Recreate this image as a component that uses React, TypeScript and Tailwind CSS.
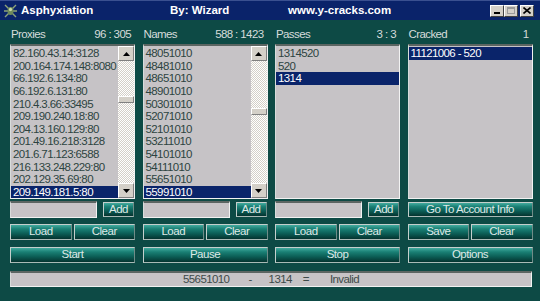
import React from 'react';

const proxies = [
  '82.160.43.14:3128',
  '200.164.174.148:8080',
  '66.192.6.134:80',
  '66.192.6.131:80',
  '210.4.3.66:33495',
  '209.190.240.18:80',
  '204.13.160.129:80',
  '201.49.16.218:3128',
  '201.6.71.123:6588',
  '216.133.248.229:80',
  '202.129.35.69:80',
  '209.149.181.5:80',
];

const names = [
  '48051010',
  '48481010',
  '48651010',
  '48901010',
  '50301010',
  '52071010',
  '52101010',
  '53211010',
  '54101010',
  '54111010',
  '55651010',
  '55991010',
];

const passes = ['1314520', '520', '1314'];
const cracked = ['11121006 - 520'];

function Btn({ label, className }: { label: string; className?: string }) {
  return (
    <div
      className={`flex items-center justify-center border border-[#c4cfcc] border-r-[#6f8c88] border-b-[#a9bab6] bg-[linear-gradient(to_bottom,#43ab9f_0%,#1a8075_28%,#0c5f57_60%,#04332f_100%)] text-[#dfe9e7] text-[11.5px] tracking-[-0.5px] leading-none ${className ?? ''}`}
    >
      {label}
    </div>
  );
}

function ArrowBtn({ up }: { up?: boolean }) {
  return (
    <div className="h-[15px] flex items-center justify-center bg-[#d4d0c8] border border-t-white border-l-white border-r-[#808080] border-b-[#808080]">
      <svg width="7" height="4" viewBox="0 0 7 4">
        {up ? <path d="M3.5 0 L7 4 L0 4 Z" fill="#000" /> : <path d="M0 0 L7 0 L3.5 4 Z" fill="#000" />}
      </svg>
    </div>
  );
}

function ScrollBar({ thumbTop }: { thumbTop: number }) {
  return (
    <div className="w-[16px] flex flex-col">
      <ArrowBtn up />
      <div className="flex-1 bg-[repeating-conic-gradient(#ffffff_0%_25%,#d4d0c8_0%_50%)] bg-[length:2px_2px]">
        <div style={{ height: thumbTop }} />
        <div className="h-[7px] bg-[#d4d0c8] border border-t-white border-l-white border-r-[#808080] border-b-[#808080]" />
      </div>
      <ArrowBtn />
    </div>
  );
}

function ListBox({ items, selected, thumbTop }: { items: string[]; selected: number; thumbTop?: number }) {
  return (
    <div className="h-[155px] flex bg-[#c6c3c6] border-t-2 border-t-[#5b6562] border-l border-l-[#d8dcdb] border-r border-r-[#f2f2f2] border-b border-b-[#f2f2f2]">
      <div className="flex-1 min-w-0 overflow-hidden pt-[1px]">
        {items.map((it, i) => (
          <div
            key={i}
            className={`h-[12.65px] leading-[12.65px] pl-[2px] whitespace-nowrap text-[11.5px] tracking-[-0.6px] ${i === selected ? 'bg-[#0a246a] text-white' : 'text-[#2d4341]'}`}
          >
            {it}
          </div>
        ))}
      </div>
      {thumbTop !== undefined && <ScrollBar thumbTop={thumbTop} />}
    </div>
  );
}

function Column({
  title,
  count,
  items,
  selected,
  thumbTop,
  inputRow,
  mid,
  bottom,
}: {
  title: string;
  count: string;
  items: string[];
  selected: number;
  thumbTop?: number;
  inputRow: React.ReactNode;
  mid: [string, string];
  bottom: string;
}) {
  return (
    <div className="w-[125px] flex flex-col">
      <div className="h-[24px] flex items-end justify-between pb-[4px] pl-[1px] pr-[4px] text-[11.5px] tracking-[-0.6px] text-[#d6dcdb] leading-none">
        <span>{title}</span>
        <span>{count}</span>
      </div>
      <ListBox items={items} selected={selected} thumbTop={thumbTop} />
      <div className="mt-[2px] h-[17px] flex">{inputRow}</div>
      <div className="mt-[6px] h-[16px] flex gap-[2px]">
        <Btn label={mid[0]} className="flex-1" />
        <Btn label={mid[1]} className="flex-1" />
      </div>
      <Btn label={bottom} className="mt-[7px] h-[16px]" />
    </div>
  );
}

function AddRow() {
  return (
    <>
      <div className="flex-1 bg-[#c6c3c6] border-t-2 border-t-[#5b6562] border-l border-l-[#d8dcdb] border-r border-r-[#f2f2f2] border-b border-b-[#f2f2f2]" />
      <Btn label="Add" className="ml-[6px] mr-[1px] w-[31px] mt-[1px] h-[15px]" />
    </>
  );
}

function TitleIcon() {
  return (
    <svg width="15" height="15" viewBox="0 0 15 15">
      <path d="M2 2 L6 6 M13 2 L9 6 M1 8 L5 8 M14 8 L10 8 M2 14 L6 10 M13 14 L9 10" stroke="#8fa47a" strokeWidth="1.4" />
      <ellipse cx="7.5" cy="8" rx="3" ry="4" fill="#6f8a5a" />
      <ellipse cx="7.5" cy="6.5" rx="1.6" ry="1.8" fill="#c9d8a8" />
    </svg>
  );
}

function WinBtn({ children }: { children: React.ReactNode }) {
  return (
    <div className="w-[14px] h-[12px] flex items-center justify-center bg-[#d4d0c8] border border-t-white border-l-white border-r-[#404040] border-b-[#404040]">
      {children}
    </div>
  );
}

export default function App() {
  return (
    <div className="w-[540px] h-[301px] overflow-hidden bg-[#0d4a45] flex flex-col font-['Liberation_Sans',Arial,sans-serif]">
      <div className="h-[20px] bg-[#0a236a] border-t border-t-[#3a5090] flex items-center text-white font-bold text-[11.5px]">
        <div className="w-[21px] pl-[3px] flex items-center">
          <TitleIcon />
        </div>
        <span className="w-[149px]">Asphyxiation</span>
        <span className="w-[118px]">By: Wizard</span>
        <span className="flex-1">www.y-cracks.com</span>
        <div className="flex items-center mr-[6px]">
          <WinBtn>
            <div className="w-[6px] h-[2px] bg-black mt-[5px]" />
          </WinBtn>
          <WinBtn>
            <div className="w-[8px] h-[7px] border border-[#9a9a9a] border-t-2" />
          </WinBtn>
          <div className="w-[2px]" />
          <WinBtn>
            <svg width="8" height="7" viewBox="0 0 8 7">
              <path d="M0.5 0.5 L7.5 6.5 M7.5 0.5 L0.5 6.5" stroke="#000" strokeWidth="1.6" />
            </svg>
          </WinBtn>
        </div>
      </div>

      <div className="flex gap-[7.5px] pl-[10px]">
        <Column
          title="Proxies"
          count="96 : 305"
          items={proxies}
          selected={11}
          thumbTop={35}
          inputRow={<AddRow />}
          mid={['Load', 'Clear']}
          bottom="Start"
        />
        <Column
          title="Names"
          count="588 : 1423"
          items={names}
          selected={11}
          thumbTop={47}
          inputRow={<AddRow />}
          mid={['Load', 'Clear']}
          bottom="Pause"
        />
        <Column
          title="Passes"
          count="3 : 3"
          items={passes}
          selected={2}
          inputRow={<AddRow />}
          mid={['Load', 'Clear']}
          bottom="Stop"
        />
        <Column
          title="Cracked"
          count="1"
          items={cracked}
          selected={0}
          inputRow={<Btn label="Go To Account Info" className="flex-1 mt-[1px] h-[15px]" />}
          mid={['Save', 'Clear']}
          bottom="Options"
        />
      </div>

      <div className="mt-[8px] ml-[10px] w-[522px] h-[16px] flex items-center bg-[#c6c3c6] border-t-2 border-t-[#5b6562] border-l border-l-[#d8dcdb] border-r border-r-[#f2f2f2] border-b border-b-[#f2f2f2] text-[11.5px] tracking-[-0.6px] text-[#3d4a49] leading-none">
        <span className="ml-[172px]">55651010</span>
        <span className="ml-[19px]">-</span>
        <span className="ml-[17px]">1314</span>
        <span className="ml-[11px]">=</span>
        <span className="ml-[21px]">Invalid</span>
      </div>
    </div>
  );
}
